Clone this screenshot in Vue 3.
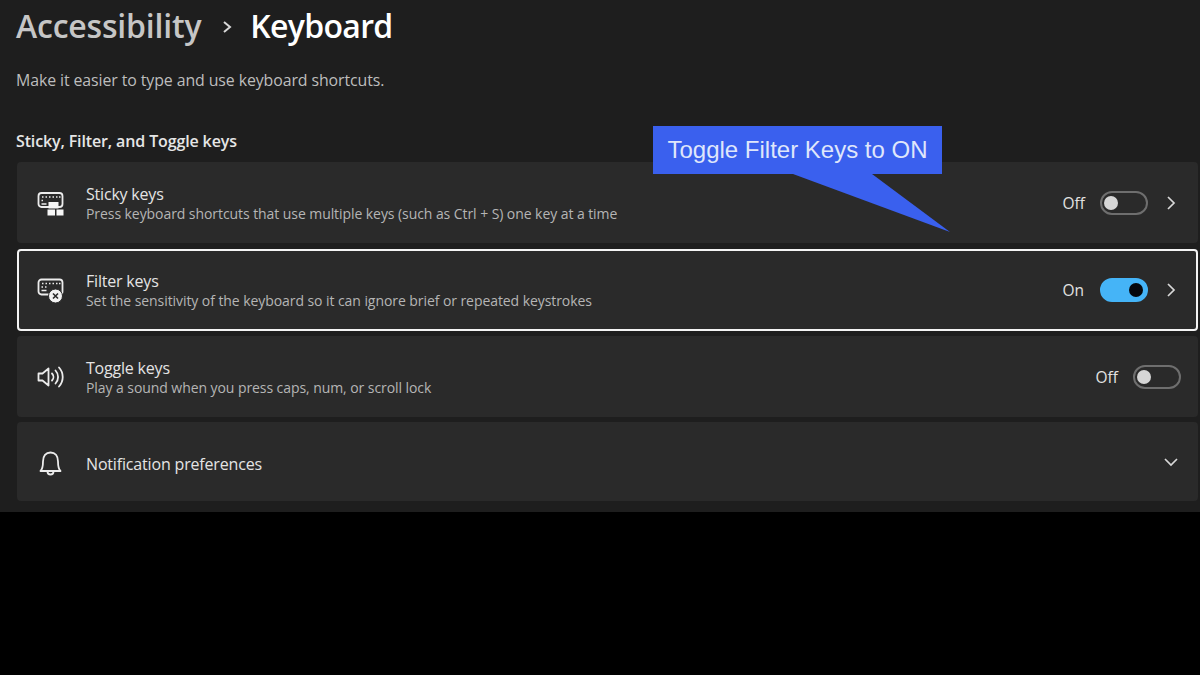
<template>
  <div class="page">
    <div class="panel">
      <h1 class="crumbs">
        <span class="parent">Accessibility</span>
        <svg class="crumb-sep" width="12" height="14" viewBox="0 0 12 14"><path d="M3 2l6 5-6 5" /></svg>
        <span class="current">Keyboard</span>
      </h1>
      <p class="intro">Make it easier to type and use keyboard shortcuts.</p>
      <h2 class="section">Sticky, Filter, and Toggle keys</h2>

      <div class="list">
        <div class="row">
          <svg class="icon" width="28" height="28" viewBox="0 0 28 28">
            <rect x="2.500" y="4" width="24" height="14" rx="3" class="line thick" />
            <path d="M6 8h1.500M9.500 8h1.500M13 8h1.500M16.500 8h1.500M20 8h1.500M23 8h1.500M5.500 11.500h1.500M5.500 15h5" class="line" />
            <rect x="12.500" y="13" width="10" height="6.500" fill="#f6f6f6" />
            <rect x="11.500" y="20.500" width="7.500" height="6" fill="#f6f6f6" />
            <rect x="20.500" y="20.500" width="7" height="6" fill="#f6f6f6" />
          </svg>
          <div class="text">
            <div class="name">Sticky keys</div>
            <div class="desc">Press keyboard shortcuts that use multiple keys (such as Ctrl + S) one key at a time</div>
          </div>
          <span class="state">Off</span>
          <span class="switch"><i class="knob"></i></span>
          <svg class="chev" width="12" height="16" viewBox="0 0 12 16"><path d="M3 2l6 6-6 6" /></svg>
        </div>

        <div class="row focused">
          <svg class="icon" width="28" height="28" viewBox="0 0 28 28">
            <rect x="2.500" y="3.500" width="24" height="15" rx="3" class="line thick" />
            <path d="M6 7.500h1.500M9.500 7.500h1.500M13 7.500h1.500M16.500 7.500h1.500M20 7.500h1.500M23 7.500h1.500M5.500 11h1.500M9 11h1.500M5.500 14.500h5" class="line" />
            <circle cx="19.500" cy="20" r="7" fill="#f2f2f2" stroke="#2a2a2a" stroke-width="1" />
            <path d="M17 17.500l5 5M22 17.500l-5 5" stroke="#2a2a2a" stroke-width="1.600" fill="none" />
          </svg>
          <div class="text">
            <div class="name">Filter keys</div>
            <div class="desc">Set the sensitivity of the keyboard so it can ignore brief or repeated keystrokes</div>
          </div>
          <span class="state">On</span>
          <span class="switch on"><i class="knob"></i></span>
          <svg class="chev" width="12" height="16" viewBox="0 0 12 16"><path d="M3 2l6 6-6 6" /></svg>
        </div>

        <div class="row">
          <svg class="icon" width="28" height="28" viewBox="0 0 28 28">
            <path d="M2.500 10.500v7h4l6 5V5.500l-6 5z" class="line thick" stroke-linejoin="round" />
            <path d="M16 10.500a5 5 0 0 1 0 7M19.500 7.500a9.500 9.500 0 0 1 0 13M23 4.500a14 14 0 0 1 0 19" class="line thick" stroke-linecap="round" />
          </svg>
          <div class="text">
            <div class="name">Toggle keys</div>
            <div class="desc">Play a sound when you press caps, num, or scroll lock</div>
          </div>
          <span class="state">Off</span>
          <span class="switch"><i class="knob"></i></span>
        </div>

        <div class="row short">
          <svg class="icon" width="28" height="28" viewBox="0 0 28 28">
            <path d="M4.500 23c1.500-1.500 2.500-3 2.500-9.500 0-5.500 2.800-9 7.500-9s7.500 3.500 7.500 9c0 6.500 1 8 2.500 9.500z" class="line thick" stroke-linejoin="round" />
            <path d="M11.500 23.500a3 3 0 0 0 6 0" class="line thick" />
          </svg>
          <div class="text">
            <div class="name big">Notification preferences</div>
          </div>
          <svg class="chev" width="16" height="12" viewBox="0 0 16 12"><path d="M2 3l6 6 6-6" /></svg>
        </div>
      </div>

      <!-- annotation laid over the screenshot -->
      <div class="callout">
        <span class="callout-label">Toggle Filter Keys to ON</span>
        <svg class="callout-tail" width="300" height="60" viewBox="0 0 300 60"><path d="M140 0L297 58 219 0z" /></svg>
      </div>
    </div>
  </div>
</template>

<script setup>
</script>

<style>
html, body {
  margin: 0;
  background: #000;
}
</style>

<style scoped>
.page {
  width: 1200px;
  height: 675px;
  background: #000;
  overflow: hidden;
  font-family: "Open Sans", "Noto Sans", sans-serif;
}

.panel {
  position: relative;
  box-sizing: border-box;
  height: 512px;
  padding: 0 2px 0 16px;
  background: #1e1e1e;
}

.crumbs {
  display: flex;
  align-items: center;
  height: 51px;
  margin: 0;
  font-size: 32px;
  font-weight: 600;
}

.parent {
  color: #c6c6c6;
  letter-spacing: -0.2px;
}

.current {
  color: #fff;
  letter-spacing: -0.7px;
}

.crumb-sep {
  margin: 2px 17px 0 20px;
}

.crumb-sep path {
  fill: none;
  stroke: #d8d8d8;
  stroke-width: 2;
}

.intro {
  margin: 17px 0 0;
  height: 24px;
  line-height: 24px;
  font-size: 15.900px;
  color: #bdbdbd;
  letter-spacing: -0.1px;
}

.section {
  margin: 37px 0 0;
  height: 24px;
  line-height: 24px;
  font-size: 16px;
  font-weight: 600;
  color: #e6e6e6;
  letter-spacing: -0.13px;
}

.list {
  display: flex;
  flex-direction: column;
  gap: 5px;
  margin: 9px 0 0 1px;
}

.row {
  display: flex;
  align-items: center;
  box-sizing: border-box;
  height: 81px;
  padding: 0 17px 0 19px;
  background: #2a2a2a;
  border-radius: 4px;
}

.row.focused {
  height: 82px;
  border: 2px solid #f4f4f4;
  padding: 0 15px 0 17px;
  margin-top: 1px;
}

.row.short {
  height: 79px;
}

.icon {
  flex: none;
  margin-right: 22px;
}

.line {
  fill: none;
  stroke: #ececec;
  stroke-width: 1.500;
}

.line.thick {
  stroke-width: 1.800;
}

.text {
  flex: 1;
  min-width: 0;
  padding-top: 2px;
}

.name {
  font-size: 16px;
  line-height: 20px;
  color: #e4e4e4;
  letter-spacing: -0.2px;
}

.name.big {
  margin-top: 2px;
  letter-spacing: -0.17px;
}

.desc {
  font-size: 14px;
  line-height: 20px;
  color: #b5b5b5;
  letter-spacing: -0.07px;
}

.state {
  font-size: 15.500px;
  color: #e2e2e2;
  margin-right: 15px;
}

.row.focused .state {
  margin-right: 16px;
}

.switch {
  display: flex;
  align-items: center;
  box-sizing: border-box;
  width: 48px;
  height: 24px;
  padding: 0 2px;
  border: 2px solid #6e6e6e;
  border-radius: 12px;
}

.knob {
  display: block;
  width: 14px;
  height: 14px;
  border-radius: 50%;
  background: #d6d6d6;
}

.switch.on {
  justify-content: flex-end;
  padding: 0 3px;
  background: #45b4f7;
  border-color: #45b4f7;
}

.switch.on .knob {
  background: #05070c;
}

.chev {
  flex: none;
  margin: 0 4px 0 17px;
}

.chev path {
  fill: none;
  stroke: #d8d8d8;
  stroke-width: 1.700;
}

.row.short .chev {
  margin: 0 2px 0 0;
}

.callout {
  position: absolute;
  left: 653px;
  top: 126px;
  width: 289px;
  height: 48px;
  display: flex;
  align-items: center;
  justify-content: center;
  background: #3a60ee;
}

.callout-label {
  font-family: "Liberation Sans", Arial, sans-serif;
  font-size: 24px;
  color: #dfe6fb;
}

.callout-tail {
  position: absolute;
  left: 0;
  top: 48px;
  overflow: visible;
}

.callout-tail path {
  fill: #3a60ee;
}
</style>
